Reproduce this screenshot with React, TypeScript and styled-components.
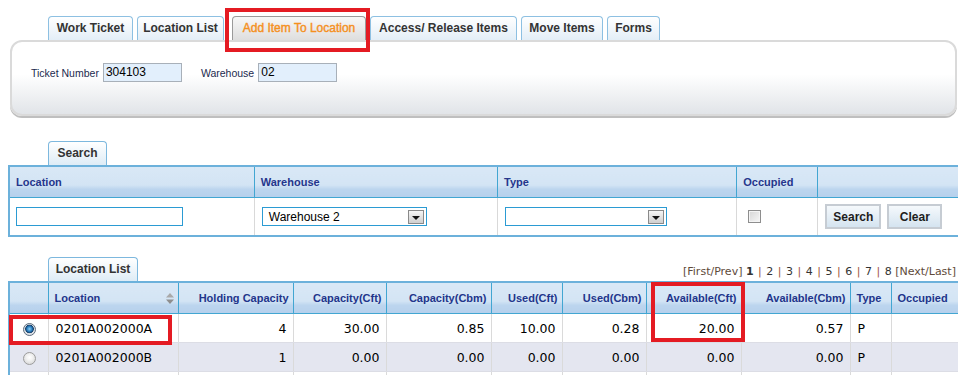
import React from 'react';
import styled, { createGlobalStyle, css } from 'styled-components';

const GlobalStyle = createGlobalStyle`
    html, body {
        margin: 0;
        padding: 0;
        overflow: hidden;
        background: #fff;
    }
    body {
        font-family: "Liberation Sans", Arial, sans-serif;
    }
`;

const RED = '#e41b23';
const BLUE_LINE = '#6cb1db';

const headerBg = css`
    background: linear-gradient(to bottom, #d9e8f6 0%, #d3e4f4 60%, #bcd5ee 74%, #b6d0ec 100%);
`;

const Page = styled.div`
    width: 958px;
    height: 375px;
    overflow: hidden;
    padding-top: 16px;
    box-sizing: border-box;
`;

const TabBar = styled.div`
    display: flex;
    align-items: flex-end;
    gap: 4px;
    margin-left: 48px;
    height: 24px;
    position: relative;
    z-index: 2;
`;

const Tab = styled.div<{ $w: number; $active?: boolean }>`
    width: ${p => p.$w}px;
    height: 24px;
    box-sizing: border-box;
    border: 1px solid #8dc0e2;
    border-bottom: none;
    border-radius: 4px 4px 0 0;
    background: linear-gradient(to bottom, #ffffff, #e3eef7);
    font-size: 12px;
    font-weight: bold;
    color: #333;
    line-height: 23px;
    text-align: center;
    white-space: nowrap;

    ${p => p.$active && css`
        position: relative;
        margin-left: 4px;
        border-color: #9a9a9a;
        background: linear-gradient(to bottom, #f7f7f7, #dedede);
        color: #f5901e;
        font-weight: normal;
        -webkit-text-stroke: 0.4px #f5901e;

        &::after {
            content: '';
            position: absolute;
            left: -8px;
            right: -5px;
            top: -9px;
            bottom: -12px;
            border: 4px solid ${RED};
            pointer-events: none;
        }
    `}
`;

const Panel = styled.div`
    margin-left: 10px;
    width: 947px;
    height: 76px;
    box-sizing: border-box;
    border: 2px solid #dadada;
    border-radius: 12px;
    background: linear-gradient(to bottom, #ffffff 0%, #ffffff 45%, #e1e4e8 100%);
    box-shadow: 0 2px 0 #bfbfbf;
    padding: 21px 0 0 19px;
    display: flex;
    align-items: flex-start;
`;

const FieldGroup = styled.div`
    display: flex;
    align-items: center;
    gap: 4px;
    margin-right: 19px;
    height: 19px;
`;

const Label = styled.span`
    font-size: 10.5px;
    color: #1b2a4e;
`;

const ReadInput = styled.div`
    width: 79px;
    height: 19px;
    box-sizing: border-box;
    border: 1px solid #a8b0b9;
    background: #e2effc;
    font-size: 12px;
    line-height: 17px;
    padding-left: 2px;
    color: #000;
`;

const Section = styled.div<{ $top: number }>`
    margin-top: ${p => p.$top}px;
`;

const SectionHead = styled.div`
    display: flex;
    align-items: flex-end;
`;

const SectionTab = styled.div<{ $w: number }>`
    margin-left: 48px;
    width: ${p => p.$w}px;
    height: 24px;
    box-sizing: border-box;
    border: 1px solid #7db8de;
    border-bottom: none;
    border-radius: 4px 4px 0 0;
    background: linear-gradient(to bottom, #ffffff, #deecf6);
    font-size: 12px;
    font-weight: bold;
    color: #333;
    line-height: 23px;
    text-align: center;
`;

const Pager = styled.div`
    margin-left: 545px;
    margin-bottom: 3px;
    font-family: "DejaVu Sans", Verdana, sans-serif;
    font-size: 11px;
    line-height: 13px;
    color: #333;
    white-space: nowrap;
`;

const PagerLink = styled.span`
    color: #5e4a3a;
`;

const PageNum = styled.span<{ $current?: boolean }>`
    color: #333;
    font-weight: ${p => (p.$current ? 'bold' : 'normal')};
`;

const Sep = styled.span`
    color: #a0523a;
    margin: 0 1px;
`;

const SearchTable = styled.table`
    margin-left: 8px;
    width: 962px;
    table-layout: fixed;
    border-collapse: collapse;
    border-top: 2px solid ${BLUE_LINE};
    border-left: 2px solid ${BLUE_LINE};
    border-bottom: 2px solid ${BLUE_LINE};
`;

const SearchTh = styled.th`
    ${headerBg};
    height: 30px;
    padding: 0 0 0 6px;
    text-align: left;
    font-size: 11px;
    font-weight: bold;
    color: #25368c;
    border-left: 1px solid #42a6d2;
    border-bottom: 1px solid #42a6d2;
`;

const SearchTd = styled.td<{ $pad: number }>`
    height: 37px;
    padding: 0 0 0 ${p => p.$pad}px;
    border-left: 1px solid #d9d9d9;
    vertical-align: middle;
`;

const TextBox = styled.div<{ $w: number }>`
    width: ${p => p.$w}px;
    height: 19px;
    box-sizing: border-box;
    border: 1px solid #2b9bd3;
    background: #fff;
`;

const SelectBox = styled.div<{ $w: number }>`
    width: ${p => p.$w}px;
    height: 19px;
    box-sizing: border-box;
    border: 1px solid #2b9bd3;
    background: #fff;
    display: flex;
    align-items: center;
    justify-content: space-between;
    padding: 0 2px 0 6px;
    font-size: 12px;
    color: #000;
`;

const DropButton = styled.span`
    width: 16px;
    height: 14px;
    box-sizing: border-box;
    border: 1px solid #8a8a8a;
    background: linear-gradient(to bottom, #f6f6f6, #cfcfcf);
    display: flex;
    align-items: center;
    justify-content: center;

    &::before {
        content: '';
        border-left: 4px solid transparent;
        border-right: 4px solid transparent;
        border-top: 4px solid #111;
        margin-top: 2px;
    }
`;

const CheckBox = styled.span`
    display: block;
    width: 13px;
    height: 13px;
    box-sizing: border-box;
    border: 1px solid #8e8e8e;
    background: linear-gradient(135deg, #d6d6d6, #f7f7f7);
    box-shadow: inset 0 0 0 1px #f4f4f4;
`;

const ButtonRow = styled.div`
    display: flex;
    gap: 6px;
`;

const Button = styled.button<{ $w: number }>`
    width: ${p => p.$w}px;
    height: 25px;
    box-sizing: border-box;
    border: 2px solid #c6ccd3;
    background: linear-gradient(to bottom, #f5f9fc, #d5e4f0);
    font-family: "Liberation Sans", Arial, sans-serif;
    font-size: 12px;
    font-weight: bold;
    color: #1d1d1d;
    padding: 0;
`;

const GridWrap = styled.div`
    position: relative;
    margin-left: 8px;
    width: 975px;
`;

const GridTable = styled.table`
    width: 975px;
    table-layout: fixed;
    border-collapse: collapse;
    border-top: 2px solid ${BLUE_LINE};
    border-left: 2px solid ${BLUE_LINE};
`;

const GridTh = styled.th<{ $align?: 'left' | 'right' }>`
    ${headerBg};
    height: 30px;
    padding: 0 4px 0 6px;
    text-align: ${p => p.$align || 'right'};
    font-size: 11px;
    font-weight: bold;
    color: #22358b;
    white-space: nowrap;
    border-left: 1px solid #42a6d2;
    border-bottom: 1px solid #42a6d2;
`;

const HeadInner = styled.div`
    display: flex;
    align-items: center;
    justify-content: space-between;
`;

const GridRow = styled.tr<{ $alt?: boolean }>`
    background: ${p => (p.$alt ? '#e4e6f0' : '#fff')};
`;

const GridTd = styled.td<{ $align?: 'left' | 'right' | 'center' }>`
    height: 28px;
    padding: 0 6px 0 7px;
    text-align: ${p => p.$align || 'right'};
    font-family: "DejaVu Sans", Verdana, sans-serif;
    font-size: 12.5px;
    color: #000;
    white-space: nowrap;
    border-left: 1px solid #dadada;
    border-bottom: 1px solid #dcdde5;
`;

const Radio = styled.span<{ $checked?: boolean }>`
    display: inline-block;
    width: 13px;
    height: 13px;
    box-sizing: border-box;
    border-radius: 50%;
    border: 1px solid ${p => (p.$checked ? '#5d6d7e' : '#9c9c9c')};
    background: ${p =>
        p.$checked
            ? 'radial-gradient(circle at 50% 45%, #8fd0f5 0, #2a7fc0 2.5px, #163f6a 4px, #d8dde2 4.6px, #f4f4f4 100%)'
            : 'radial-gradient(circle at 50% 40%, #ffffff 0, #f2f2f2 3px, #cfcfcf 100%)'};
    vertical-align: middle;
`;

const Highlight = styled.div<{ $x: number; $y: number; $w: number; $h: number }>`
    position: absolute;
    left: ${p => p.$x}px;
    top: ${p => p.$y}px;
    width: ${p => p.$w}px;
    height: ${p => p.$h}px;
    box-sizing: border-box;
    border: 4px solid ${RED};
    pointer-events: none;
`;

const SortIcon = () => (
    <svg width="8" height="11" viewBox="0 0 8 11">
        <path d="M4 0 L8 4.5 L0 4.5 Z" fill="#a9a9a9" />
        <path d="M0 6.5 L8 6.5 L4 11 Z" fill="#8e8e8e" />
    </svg>
);

const topTabs = [
    { label: 'Work Ticket', w: 85 },
    { label: 'Location List', w: 87 },
    { label: 'Add Item To Location', w: 134, active: true },
    { label: 'Access/ Release Items', w: 147 },
    { label: 'Move Items', w: 82 },
    { label: 'Forms', w: 53 },
];

const gridCols = [39, 130, 115, 93, 105, 71, 84, 95, 109, 41, 93];

type Row = {
    loc: string;
    hold: string;
    capCft: string;
    capCbm: string;
    usedCft: string;
    usedCbm: string;
    availCft: string;
    availCbm: string;
    type: string;
    checked?: boolean;
};

const rows: Row[] = [
    { loc: '0201A002000A', hold: '4', capCft: '30.00', capCbm: '0.85', usedCft: '10.00', usedCbm: '0.28', availCft: '20.00', availCbm: '0.57', type: 'P', checked: true },
    { loc: '0201A002000B', hold: '1', capCft: '0.00', capCbm: '0.00', usedCft: '0.00', usedCbm: '0.00', availCft: '0.00', availCbm: '0.00', type: 'P' },
];

const App: React.FC = () => {
    return (
        <Page>
            <GlobalStyle />
            <TabBar>
                {topTabs.map(t => (
                    <Tab key={t.label} $w={t.w} $active={t.active}>{t.label}</Tab>
                ))}
            </TabBar>
            <Panel>
                <FieldGroup>
                    <Label>Ticket Number</Label>
                    <ReadInput>304103</ReadInput>
                </FieldGroup>
                <FieldGroup>
                    <Label>Warehouse</Label>
                    <ReadInput>02</ReadInput>
                </FieldGroup>
            </Panel>

            <Section $top={25}>
                <SectionHead>
                    <SectionTab $w={59}>Search</SectionTab>
                </SectionHead>
                <SearchTable>
                    <colgroup>
                        <col style={{ width: 245 }} />
                        <col style={{ width: 243 }} />
                        <col style={{ width: 239 }} />
                        <col style={{ width: 81 }} />
                        <col style={{ width: 152 }} />
                    </colgroup>
                    <thead>
                        <tr>
                            <SearchTh>Location</SearchTh>
                            <SearchTh>Warehouse</SearchTh>
                            <SearchTh>Type</SearchTh>
                            <SearchTh>Occupied</SearchTh>
                            <SearchTh />
                        </tr>
                    </thead>
                    <tbody>
                        <tr>
                            <SearchTd $pad={6}><TextBox $w={167} /></SearchTd>
                            <SearchTd $pad={7}>
                                <SelectBox $w={165}>Warehouse 2<DropButton /></SelectBox>
                            </SearchTd>
                            <SearchTd $pad={7}>
                                <SelectBox $w={162}><span /><DropButton /></SelectBox>
                            </SearchTd>
                            <SearchTd $pad={11}><CheckBox /></SearchTd>
                            <SearchTd $pad={7}>
                                <ButtonRow>
                                    <Button $w={56}>Search</Button>
                                    <Button $w={55}>Clear</Button>
                                </ButtonRow>
                            </SearchTd>
                        </tr>
                    </tbody>
                </SearchTable>
            </Section>

            <Section $top={20}>
                <SectionHead>
                    <SectionTab $w={90}>Location List</SectionTab>
                    <Pager>
                        <PagerLink>[First/Prev]</PagerLink>{' '}
                        <PageNum $current>1</PageNum>
                        {[2, 3, 4, 5, 6, 7, 8].map(n => (
                            <React.Fragment key={n}>
                                {' '}<Sep>|</Sep>{' '}<PageNum>{n}</PageNum>
                            </React.Fragment>
                        ))}{' '}
                        <PagerLink>[Next/Last]</PagerLink>
                    </Pager>
                </SectionHead>
                <GridWrap>
                    <GridTable>
                        <colgroup>
                            {gridCols.map((w, i) => (
                                <col key={i} style={{ width: w }} />
                            ))}
                        </colgroup>
                        <thead>
                            <tr>
                                <GridTh />
                                <GridTh $align="left">
                                    <HeadInner>Location<SortIcon /></HeadInner>
                                </GridTh>
                                <GridTh>Holding Capacity</GridTh>
                                <GridTh>Capacity(Cft)</GridTh>
                                <GridTh>Capacity(Cbm)</GridTh>
                                <GridTh>Used(Cft)</GridTh>
                                <GridTh>Used(Cbm)</GridTh>
                                <GridTh>Available(Cft)</GridTh>
                                <GridTh>Available(Cbm)</GridTh>
                                <GridTh $align="left">Type</GridTh>
                                <GridTh $align="left">Occupied</GridTh>
                            </tr>
                        </thead>
                        <tbody>
                            {rows.map((r, i) => (
                                <GridRow key={r.loc} $alt={i % 2 === 1}>
                                    <GridTd $align="center"><Radio $checked={r.checked} /></GridTd>
                                    <GridTd $align="left">{r.loc}</GridTd>
                                    <GridTd>{r.hold}</GridTd>
                                    <GridTd>{r.capCft}</GridTd>
                                    <GridTd>{r.capCbm}</GridTd>
                                    <GridTd>{r.usedCft}</GridTd>
                                    <GridTd>{r.usedCbm}</GridTd>
                                    <GridTd>{r.availCft}</GridTd>
                                    <GridTd>{r.availCbm}</GridTd>
                                    <GridTd $align="left">{r.type}</GridTd>
                                    <GridTd />
                                </GridRow>
                            ))}
                            <GridRow>
                                {gridCols.map((_, i) => (
                                    <GridTd key={i} />
                                ))}
                            </GridRow>
                        </tbody>
                    </GridTable>
                    <Highlight $x={1} $y={34} $w={163} $h={30} />
                    <Highlight $x={643} $y={1} $w={94} $h={60} />
                </GridWrap>
            </Section>
        </Page>
    );
};

export default App;
